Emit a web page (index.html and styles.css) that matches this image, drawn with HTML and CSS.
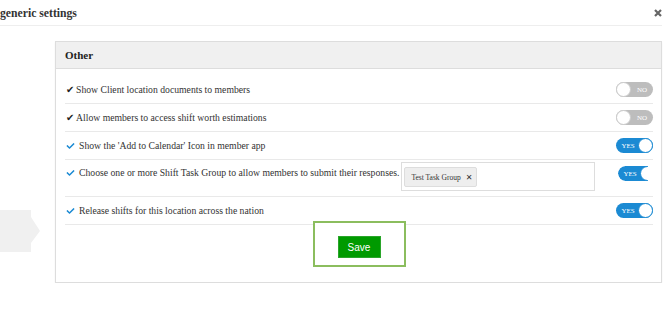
FILE: index.html
```html
<!DOCTYPE html>
<html lang="en">
<head>
    <meta charset="UTF-8">
    <title>Generic settings</title>
    <link rel="stylesheet" href="styles.css">
</head>
<body>
<div class="modal">
    <div class="modal-header">
        <h4 class="modal-title">generic settings</h4>
        <svg class="close" width="8" height="8" viewBox="0 0 8 8">
            <path d="M1 1L7 7M7 1L1 7" stroke="#666" stroke-width="2.2"/>
        </svg>
    </div>
    <div class="modal-body">
        <!-- tour pointer -->
        <div class="pointer"></div>
        <div class="panel">
            <div class="panel-heading">Other</div>
            <div class="panel-body">
                <div class="setting-row">
                    <span class="check-dark">&#10004;</span>
                    <span class="label">Show Client location documents to members</span>
                    <span class="toggle off"><span class="knob"></span><span class="toggle-text">NO</span></span>
                </div>
                <div class="setting-row">
                    <span class="check-dark">&#10004;</span>
                    <span class="label">Allow members to access shift worth estimations</span>
                    <span class="toggle off"><span class="knob"></span><span class="toggle-text">NO</span></span>
                </div>
                <div class="setting-row">
                    <svg class="check-blue" viewBox="0 0 512 512"><path d="M173.9 439.4l-166.4-166.4c-10-10-10-26.2 0-36.2l36.2-36.2c10-10 26.2-10 36.2 0L192 312.7 432.1 72.6c10-10 26.2-10 36.2 0l36.2 36.2c10 10 10 26.2 0 36.2l-294.4 294.4c-10 10-26.2 10-36.2 0z"/></svg>
                    <span class="label">Show the 'Add to Calendar' Icon in member app</span>
                    <span class="toggle on"><span class="toggle-text">YES</span><span class="knob"></span></span>
                </div>
                <div class="setting-row tall">
                    <svg class="check-blue" viewBox="0 0 512 512"><path d="M173.9 439.4l-166.4-166.4c-10-10-10-26.2 0-36.2l36.2-36.2c10-10 26.2-10 36.2 0L192 312.7 432.1 72.6c10-10 26.2-10 36.2 0l36.2 36.2c10 10 10 26.2 0 36.2l-294.4 294.4c-10 10-26.2 10-36.2 0z"/></svg>
                    <span class="label">Choose one or more Shift Task Group to allow members to submit their responses.</span>
                    <div class="tag-select">
                        <span class="tag">Test Task Group <span class="tag-remove">&#10005;</span></span>
                    </div>
                    <div class="toggle-clip">
                        <span class="toggle on"><span class="toggle-text">YES</span><span class="knob"></span></span>
                    </div>
                </div>
                <div class="setting-row">
                    <svg class="check-blue" viewBox="0 0 512 512"><path d="M173.9 439.4l-166.4-166.4c-10-10-10-26.2 0-36.2l36.2-36.2c10-10 26.2-10 36.2 0L192 312.7 432.1 72.6c10-10 26.2-10 36.2 0l36.2 36.2c10 10 10 26.2 0 36.2l-294.4 294.4c-10 10-26.2 10-36.2 0z"/></svg>
                    <span class="label">Release shifts for this location across the nation</span>
                    <span class="toggle on"><span class="toggle-text">YES</span><span class="knob"></span></span>
                </div>
                <div class="save-row">
                    <div class="highlight">
                        <button class="btn-save">Save</button>
                    </div>
                </div>
            </div>
        </div>
    </div>
</div>
</body>
</html>
```

FILE: styles.css
```css
body {
    margin: 0;
    background: #fff;
    font-family: "Liberation Serif", "Times New Roman", serif;
    color: #333;
}
.modal {
    width: 662px;
    position: relative;
}
.modal-header {
    height: 25px;
    border-bottom: 1px solid #eee;
    display: flex;
    align-items: center;
    justify-content: space-between;
}
.modal-title {
    margin: 0;
    font-size: 11.7px;
    font-weight: bold;
    color: #333;
    padding-top: 1px;
}
.close {
    display: block;
    margin-top: 1px;
}
.modal-body {
    padding: 15px 0 0 55px;
}
.pointer {
    position: absolute;
    left: 0;
    top: 210px;
    width: 40px;
    height: 42px;
    background: #f0f0f0;
    clip-path: polygon(0 0, 31px 0, 31px 7px, 40px 21px, 31px 33px, 31px 42px, 0 42px);
}
.panel {
    border: 1px solid #ddd;
    box-shadow: 0 1px 2px rgba(0, 0, 0, 0.05);
}
.panel-heading {
    height: 26px;
    background: #f0f0f0;
    border-bottom: 1px solid #ddd;
    display: flex;
    align-items: center;
    padding-left: 9px;
    font-size: 11px;
    font-weight: bold;
    color: #222;
}
.panel-body {
    padding: 7px 8px 15px 9px;
}
.setting-row {
    height: 27px;
    border-bottom: 1px solid #e9e9e9;
    display: flex;
    align-items: center;
    font-size: 9.7px;
}
.setting-row.tall {
    height: 36px;
    align-items: flex-start;
}
.setting-row.tall .label {
    margin-top: 6px;
}
.setting-row.tall .check-blue {
    margin-top: 9px;
}
.check-dark {
    font-family: "DejaVu Sans", sans-serif;
    font-size: 10px;
    color: #222;
    width: 10px;
    margin-left: 1px;
}
.check-blue {
    width: 9px;
    height: 8px;
    fill: #1b8ad3;
    margin: 0 4px 0 1px;
}
.label {
    line-height: 14px;
    white-space: nowrap;
}
.toggle {
    margin-left: auto;
    width: 37px;
    height: 15px;
    border-radius: 8px;
    display: flex;
    align-items: center;
    box-sizing: border-box;
    flex-shrink: 0;
}
.toggle.off {
    background: #bdbdbd;
}
.toggle.on {
    background: #1b8ad3;
}
.knob {
    width: 15px;
    height: 15px;
    border-radius: 50%;
    background: #fff;
    box-sizing: border-box;
}
.toggle.off .knob {
    border: 1px solid #ccc;
}
.toggle.on .knob {
    border: 1px solid #1b8ad3;
}
.toggle-text {
    flex: 1;
    text-align: center;
    font-size: 7px;
    color: #fff;
}
.toggle.on .toggle-text {
    padding-left: 2px;
}
.tag-select {
    margin: 2px 0 0 2px;
    width: 194px;
    height: 29px;
    border: 1px solid #ddd;
    box-sizing: border-box;
    display: flex;
    align-items: flex-start;
}
.tag {
    margin: 4px 0 0 2px;
    height: 20px;
    padding: 0 4px 0 6px;
    background: #eee;
    border: 1px solid #ddd;
    border-radius: 2px;
    box-sizing: border-box;
    display: flex;
    align-items: center;
    font-size: 7.5px;
    color: #333;
}
.tag-remove {
    font-family: "DejaVu Sans", sans-serif;
    font-weight: bold;
    font-size: 8px;
    margin-left: 5px;
    color: #333;
}
.toggle-clip {
    margin: 6px 5px 0 auto;
    width: 30px;
    overflow: hidden;
    border-radius: 8px 0 0 8px;
}
.toggle-clip .toggle {
    margin-left: 0;
}
.save-row {
    display: flex;
    justify-content: center;
    margin-top: -4px;
}
.highlight {
    width: 93px;
    height: 46px;
    border: 2px solid #8bbd5e;
    background: #fff;
    box-sizing: border-box;
    display: flex;
    justify-content: center;
    padding-top: 13px;
}
.btn-save {
    width: 43px;
    height: 22px;
    background: #009a00;
    border: 1px solid #2aa52a;
    color: #fff;
    font-family: "Liberation Sans", Arial, sans-serif;
    font-size: 10px;
    padding: 0;
    cursor: pointer;
}
```
